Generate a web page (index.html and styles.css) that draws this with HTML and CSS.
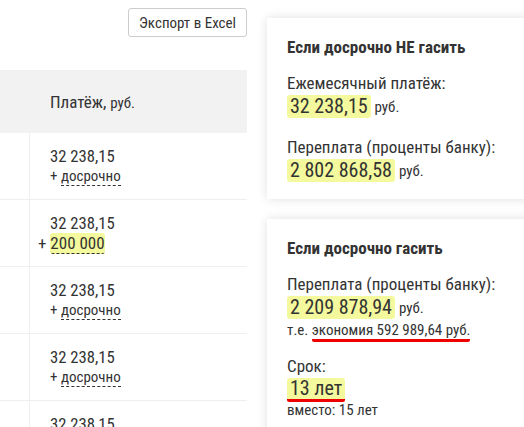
FILE: index.html
```html
<!DOCTYPE html>
<html lang="ru">
<head>
<meta charset="utf-8">
<link rel="stylesheet" href="styles.css">
</head>
<body>
<div class="page">
  <div class="left">
    <div class="toolbar">
      <button class="btn">Экспорт в Excel</button>
    </div>
    <div class="table">
      <div class="thead">
        <div class="c1"></div>
        <div class="c2">Платёж, <span class="small">руб.</span></div>
      </div>
      <div class="row">
        <div class="c1"></div>
        <div class="c2"><div class="sum">32 238,15</div><div class="extra"><span class="plus">+</span> <span class="dash">досрочно</span></div></div>
      </div>
      <div class="row">
        <div class="c1"></div>
        <div class="c2"><div class="sum">32 238,15</div><div class="extra out"><span class="plus">+</span> <span class="dash hl">200 000</span></div></div>
      </div>
      <div class="row">
        <div class="c1"></div>
        <div class="c2"><div class="sum">32 238,15</div><div class="extra"><span class="plus">+</span> <span class="dash">досрочно</span></div></div>
      </div>
      <div class="row">
        <div class="c1"></div>
        <div class="c2"><div class="sum">32 238,15</div><div class="extra"><span class="plus">+</span> <span class="dash">досрочно</span></div></div>
      </div>
      <div class="row">
        <div class="c1"></div>
        <div class="c2"><div class="sum">32 238,15</div><div class="extra"><span class="plus">+</span> <span class="dash">досрочно</span></div></div>
      </div>
    </div>
  </div>
  <div class="right">
    <div class="card">
      <div class="title">Если досрочно НЕ гасить</div>
      <div class="label">Ежемесячный платёж:</div>
      <div class="value"><span class="big hl">32 238,15</span> <span class="unit">руб.</span></div>
      <div class="label">Переплата (проценты банку):</div>
      <div class="value"><span class="big hl">2 802 868,58</span> <span class="unit">руб.</span></div>
    </div>
    <div class="card">
      <div class="title">Если досрочно гасить</div>
      <div class="label">Переплата (проценты банку):</div>
      <div class="value"><span class="big hl">2 209 878,94</span> <span class="unit">руб.</span></div>
      <div class="note">т.е. <span class="red">экономия 592 989,64 руб.</span></div>
      <div class="label term">Срок:</div>
      <div class="value"><span class="big hl redbox">13 лет</span></div>
      <div class="note instead">вместо: 15 лет</div>
    </div>
  </div>
</div>
</body>
</html>
```
FILE: styles.css
```css
html, body {
  margin: 0;
  padding: 0;
  background: #fff;
  overflow: hidden;
}
body {
  font-family: Roboto, "Noto Sans", sans-serif;
  font-stretch: 75%;
  color: #333;
  font-size: 17px;
}
.page {
  display: flex;
  gap: 20px;
  width: 600px;
}
.left {
  width: 247px;
  flex: none;
}
.toolbar {
  display: flex;
  justify-content: flex-end;
  padding-top: 8px;
  height: 70px;
  box-sizing: border-box;
}
.btn {
  font-family: inherit;
  font-stretch: inherit;
  font-size: 15px;
  color: #333;
  background: #fff;
  border: 1px solid #ccc;
  border-radius: 3px;
  height: 29px;
  width: 119px;
  padding: 0;
}
.thead {
  display: flex;
  background: #f2f2f2;
  height: 63px;
  align-items: center;
}
.thead .c1 { width: 30px; }
.thead .c2 { padding-left: 20px; font-size: 17px; }
.small { font-size: 15px; }
.row {
  display: flex;
  border-bottom: 1px solid #eee;
  height: 66px;
}
.row .c1 {
  width: 29px;
  border-right: 1px solid #eee;
}
.row .c2 {
  padding: 14px 0 0 20px;
}
.sum {
  font-size: 16.7px;
  line-height: 20px;
}
.extra {
  font-size: 15px;
  line-height: 19px;
}
.extra.out {
  margin-left: -12px;
  font-size: 17px;
}
.dash {
  border-bottom: 1px dashed #333;
}
.hl {
  background: #f3f99c;
  border-radius: 3px;
}
.right {
  padding-top: 18px;
  display: flex;
  flex-direction: column;
  gap: 20px;
  width: 300px;
}
.card {
  background: #fff;
  box-shadow: 0 0 10px rgba(0,0,0,0.12);
  padding: 19px 20px 17px;
}
.title {
  font-weight: bold;
  font-size: 17px;
  line-height: 20px;
  height: 20px;
  margin-bottom: 15px;
}
.label {
  font-size: 17px;
  line-height: 22px;
  height: 22px;
}
.value {
  margin-top: 1px;
  line-height: 23px;
  height: 23px;
}
.value + .label { margin-top: 18px; }
.big {
  font-size: 20px;
  display: inline-block;
  padding: 0 3px;
  line-height: 23px;
  vertical-align: top;
}
.unit { font-size: 15px; }
.note { font-size: 15px; line-height: 17px; height: 17px; margin-top: 3px; }
.note.instead { margin-top: 1px; }
.label.term { margin-top: 16px; }
.red {
  border-bottom: 3px solid #e00;
  border-radius: 2px;
}
.redbox {
  line-height: 21px;
  border-bottom: 3px solid #e00;
  border-radius: 3px 3px 2px 2px;
}
```
